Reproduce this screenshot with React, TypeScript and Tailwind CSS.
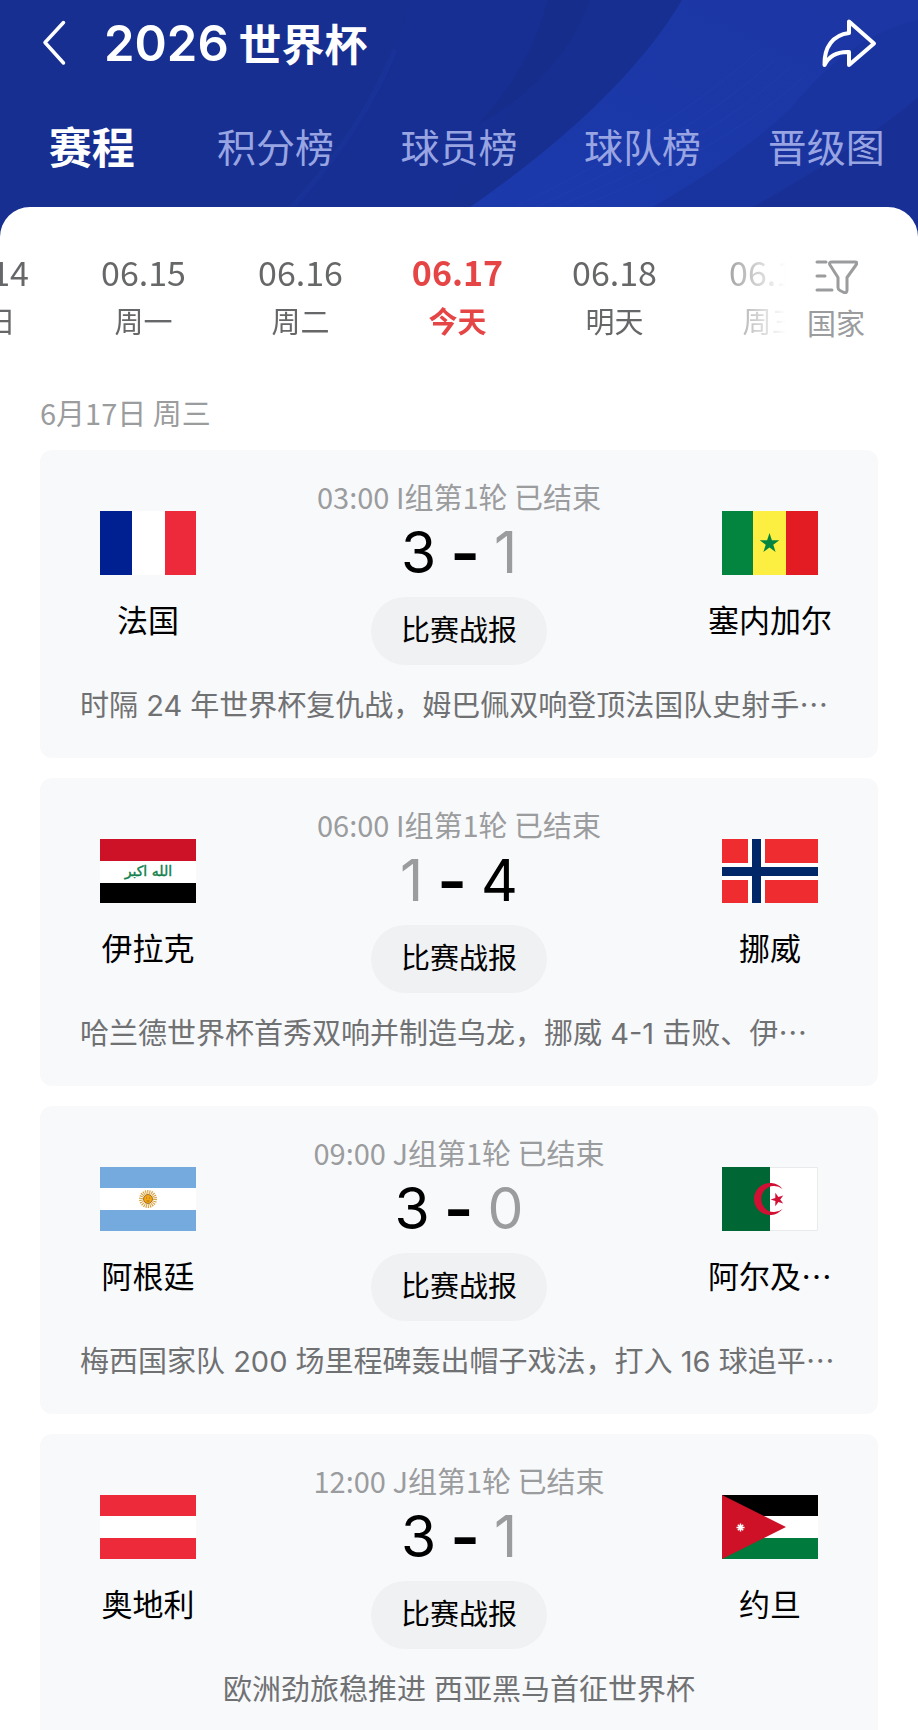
import { useState } from "react";
import type { ReactNode } from "react";
import clsx from "clsx";

/* ---------------------------------------------
   TYPES
--------------------------------------------- */

type Team = {
  name: string;
  flag: ReactNode;
};

type Match = {
  id: number;
  time: string;
  round: string;
  status: string;
  home: Team;
  away: Team;
  homeScore: number;
  awayScore: number;
  summary: string;
};

/* ---------------------------------------------
   FLAGS
--------------------------------------------- */

function Flag({ children }: { children: ReactNode }) {
  return (
    <svg viewBox="0 0 96 64" className="h-16 w-24" aria-hidden="true">
      {children}
    </svg>
  );
}

const FranceFlag = (
  <Flag>
    <rect width="96" height="64" fill="#fff" />
    <rect width="32" height="64" fill="#002091" />
    <rect x="65" width="31" height="64" fill="#ec2a3b" />
  </Flag>
);

const SenegalFlag = (
  <Flag>
    <rect width="32" height="64" fill="#04853f" />
    <rect x="31" width="33" height="64" fill="#fdef42" />
    <rect x="64" width="32" height="64" fill="#e31b22" />
    <path
      d="M47.5 22l2.4 7.2h7.4l-6 4.5 2.3 7.2-6.1-4.4-6.1 4.4 2.3-7.2-6-4.5h7.4z"
      fill="#04853f"
    />
  </Flag>
);

const IraqFlag = (
  <Flag>
    <rect width="96" height="64" fill="#fff" />
    <rect width="96" height="22" fill="#cd1126" />
    <rect y="44" width="96" height="20" />
    <g
      fill="#12804a"
      stroke="#12804a"
      strokeWidth="0.4"
      fontFamily="'DejaVu Sans', sans-serif"
      fontSize="14"
      textAnchor="middle"
    >
      <text x="36" y="37">
        اكبر
      </text>
      <text x="62" y="37">
        الله
      </text>
    </g>
  </Flag>
);

const NorwayFlag = (
  <Flag>
    <rect width="96" height="64" fill="#ef2d31" />
    <path d="M26 0h17v64h-17zM0 24h96v17h-96z" fill="#fff" />
    <path d="M30 0h9v64h-9zM0 28h96v9h-96z" fill="#002868" />
  </Flag>
);

const ArgentinaFlag = (
  <Flag>
    <rect width="96" height="64" fill="#74aade" />
    <rect y="21" width="96" height="22" fill="#fff" />
    <circle
      cx="48"
      cy="32"
      r="7"
      fill="none"
      stroke="#d9a441"
      strokeWidth="4"
      strokeDasharray="1.1 0.9"
    />
    <circle cx="48" cy="32" r="4.5" fill="#f2a516" stroke="#8a5a14" strokeWidth="0.8" />
    <path d="M46 31h1M49 31h1M46.5 34h3" stroke="#8a5a14" strokeWidth="0.7" />
  </Flag>
);

const AlgeriaFlag = (
  <Flag>
    <rect width="96" height="64" fill="#fff" />
    <rect width="48" height="64" fill="#006633" />
    <path d="M60.500 22a16 16 0 1 0 0 20a13 13 0 1 1 0-20z" fill="#d21034" />
    <path d="M48.500 32.500L61.200 28.400L53.300 39.200V25.800L61.200 36.600z" fill="#d21034" />
    <path d="M48 .5h47.500v63h-47.500" fill="none" stroke="#e8eaec" />
  </Flag>
);

const AustriaFlag = (
  <Flag>
    <rect width="96" height="64" fill="#ed2a39" />
    <rect y="21" width="96" height="22" fill="#fff" />
  </Flag>
);

const JordanFlag = (
  <Flag>
    <rect width="96" height="64" fill="#fff" />
    <rect width="96" height="21" />
    <rect y="43" width="96" height="21" fill="#007a3d" />
    <path d="M0 0l64 32-64 32z" fill="#ce1126" />
    <path
      d="M18.500 28.500v8M14.500 32.500h8M15.800 29.800l5.400 5.400M21.200 29.800l-5.400 5.400"
      stroke="#fff"
      strokeWidth="1.500"
    />
  </Flag>
);

/* ---------------------------------------------
   DATA
--------------------------------------------- */

const TABS = ["赛程", "积分榜", "球员榜", "球队榜", "晋级图"];

const DAYS = [
  { date: "06.14", label: "周日" },
  { date: "06.15", label: "周一" },
  { date: "06.16", label: "周二" },
  { date: "06.17", label: "今天" },
  { date: "06.18", label: "明天" },
  { date: "06.19", label: "周三" },
];

const MATCHES: Match[] = [
  {
    id: 1,
    time: "03:00",
    round: "I组第1轮",
    status: "已结束",
    home: { name: "法国", flag: FranceFlag },
    away: { name: "塞内加尔", flag: SenegalFlag },
    homeScore: 3,
    awayScore: 1,
    summary: "时隔 24 年世界杯复仇战，姆巴佩双响登顶法国队史射手⋯",
  },
  {
    id: 2,
    time: "06:00",
    round: "I组第1轮",
    status: "已结束",
    home: { name: "伊拉克", flag: IraqFlag },
    away: { name: "挪威", flag: NorwayFlag },
    homeScore: 1,
    awayScore: 4,
    summary: "哈兰德世界杯首秀双响并制造乌龙，挪威 4-1 击败、伊⋯",
  },
  {
    id: 3,
    time: "09:00",
    round: "J组第1轮",
    status: "已结束",
    home: { name: "阿根廷", flag: ArgentinaFlag },
    away: { name: "阿尔及⋯", flag: AlgeriaFlag },
    homeScore: 3,
    awayScore: 0,
    summary: "梅西国家队 200 场里程碑轰出帽子戏法，打入 16 球追平⋯",
  },
  {
    id: 4,
    time: "12:00",
    round: "J组第1轮",
    status: "已结束",
    home: { name: "奥地利", flag: AustriaFlag },
    away: { name: "约旦", flag: JordanFlag },
    homeScore: 3,
    awayScore: 1,
    summary: "欧洲劲旅稳推进 西亚黑马首征世界杯",
  },
];

/* ---------------------------------------------
   HEADER
--------------------------------------------- */

function HeaderArt() {
  return (
    <svg
      viewBox="0 0 918 240"
      preserveAspectRatio="none"
      className="absolute inset-0 h-full w-full"
      aria-hidden="true"
    >
      <defs>
        <linearGradient id="band" x1="0" y1="1" x2="1" y2="0">
          <stop offset="0" stopColor="#1b3aad" />
          <stop offset="1" stopColor="#1c36a3" />
        </linearGradient>
      </defs>
      <rect width="918" height="240" fill="#172f90" />
      <path d="M410 0Q380 120 285 215H440Q520 120 548 0z" fill="#18329a" opacity="0.35" />
      <path d="M548 0Q530 70 478 125Q560 80 590 0z" fill="#162b86" opacity="0.5" />
      <path d="M682 0Q620 105 460 215L425 240H918V0z" fill="url(#band)" />
      <path d="M918 20Q850 35 790 110Q730 165 640 215L600 240H918z" fill="#1a349f" />
      <path d="M918 98Q850 155 740 215L700 240H918z" fill="#183095" />
      <g fill="none" stroke="#2a49bd" strokeOpacity="0.25">
        <path d="M760 50Q660 140 500 215" />
        <path d="M775 60Q680 145 520 215" />
        <path d="M790 68Q700 150 540 215" />
        <path d="M805 76Q720 155 560 215" />
        <path d="M395 50Q360 135 290 210" strokeWidth="5" strokeOpacity="0.14" />
      </g>
    </svg>
  );
}

function Header({ active, onChange }: { active: string; onChange: (tab: string) => void }) {
  return (
    <header className="relative pb-8 text-white">
      <HeaderArt />
      <div className="relative flex h-[86px] items-center justify-between px-10">
        <div className="flex items-center gap-9">
          <button type="button" aria-label="返回">
            <svg viewBox="0 0 28 46" className="h-[46px] w-7" fill="none" aria-hidden="true">
              <path
                d="M23.500 2.500L5 22.500l18.500 20.500"
                stroke="#fff"
                strokeWidth="3.500"
                strokeLinecap="round"
                strokeLinejoin="round"
              />
            </svg>
          </button>
          <h1 className="text-[43px] leading-[48px] font-bold">
            <span className="font-['Inter'] text-[49px] font-semibold">2026</span> 世界杯
          </h1>
        </div>
        <button type="button" aria-label="分享">
          <svg viewBox="0 0 58 54" className="h-[54px] w-[58px]" fill="none" aria-hidden="true">
            <path
              d="M29 5.500v11.500C13 19 4 31 4.500 49c5-10 13-13.500 24.500-13v13L54 27.500z"
              stroke="#fff"
              strokeWidth="4"
              strokeLinejoin="round"
            />
          </svg>
        </button>
      </div>
      <nav className="relative grid h-[121px] grid-cols-5 items-center pb-1">
        {TABS.map((tab) => (
          <button
            key={tab}
            type="button"
            onClick={() => onChange(tab)}
            className={clsx(
              "leading-[56px] whitespace-nowrap",
              tab === active ? "text-[43px] font-bold text-white" : "text-[39px] text-[#98a5e2]"
            )}
          >
            {tab}
          </button>
        ))}
      </nav>
    </header>
  );
}

/* ---------------------------------------------
   DATE STRIP
--------------------------------------------- */

function DateStrip({ active, onChange }: { active: string; onChange: (date: string) => void }) {
  return (
    <div className="flex items-start justify-between">
      <div className="min-w-0 flex-1 overflow-hidden [mask-image:linear-gradient(to_left,transparent,black_96px)]">
        <div className="-ml-[92px] flex">
          {DAYS.map((day) => (
            <button
              key={day.date}
              type="button"
              onClick={() => onChange(day.date)}
              className={clsx(
                "flex w-[157px] shrink-0 flex-col items-center gap-2",
                day.date === active ? "font-bold text-[#e64545]" : "text-[#666769]"
              )}
            >
              <span className="text-[34px] leading-10">{day.date}</span>
              <span className="text-[29px] leading-10">{day.label}</span>
            </button>
          ))}
        </div>
      </div>
      <button
        type="button"
        className="flex w-[132px] shrink-0 flex-col items-center gap-2 pt-0.5 pr-8 text-[#9b9c9e]"
      >
        <svg
          viewBox="0 0 44 40"
          className="h-10 w-11"
          fill="none"
          stroke="currentColor"
          strokeWidth="3"
          strokeLinecap="round"
          strokeLinejoin="round"
          aria-hidden="true"
        >
          <path d="M3 8h9M3 22h8M3 36h15" />
          <path d="M18 8h23q3 0 1 3L33 23.500V36q0 3.500-3 2.500l-4-2q-2-1-2-3V23.500L16 11q-1.500-3 2-3z" />
        </svg>
        <span className="text-[29px] leading-10">国家</span>
      </button>
    </div>
  );
}

/* ---------------------------------------------
   MATCH CARD
--------------------------------------------- */

function TeamColumn({ team }: { team: Team }) {
  return (
    <div className="flex w-[136px] shrink-0 flex-col items-center pt-[35px]">
      {team.flag}
      <span className="mt-6 text-[31px] leading-10 whitespace-nowrap text-black">{team.name}</span>
    </div>
  );
}

function MatchCard({ match }: { match: Match }) {
  const { home, away, homeScore, awayScore } = match;

  return (
    <article className="rounded-xl bg-[#f8f9fb] px-10 pt-[26px] pb-8">
      <div className="flex justify-between">
        <TeamColumn team={home} />

        <div className="flex flex-col items-center">
          <p className="text-[29px] leading-10 whitespace-nowrap text-[#9b9c9e]">
            {match.time} {match.round} {match.status}
          </p>
          <p className="flex items-center justify-center gap-3.5 font-['Inter'] text-[57px] leading-[73px] text-black">
            <span className={clsx(homeScore < awayScore && "text-[#9b9c9e]")}>{homeScore}</span>
            <span className="text-[64px] font-semibold">-</span>
            <span className={clsx(awayScore < homeScore && "text-[#9b9c9e]")}>{awayScore}</span>
          </p>
          <button
            type="button"
            className="mt-2 h-17 rounded-full bg-[#f0f1f3] px-[30px] pb-1 text-[29px] text-black"
          >
            比赛战报
          </button>
        </div>

        <TeamColumn team={away} />
      </div>

      <p
        className={clsx(
          "mt-[21px] overflow-hidden font-['Inter','Noto_Sans_CJK_SC',sans-serif] text-[29px] leading-10 whitespace-nowrap text-[#707173]",
          !match.summary.endsWith("⋯") && "text-center"
        )}
      >
        {match.summary}
      </p>
    </article>
  );
}

/* ---------------------------------------------
   PAGE
--------------------------------------------- */

export default function App() {
  const [tab, setTab] = useState("赛程");
  const [day, setDay] = useState("06.17");

  return (
    <div className="min-h-screen bg-white font-['Noto_Sans_CJK_SC',sans-serif]">
      <Header active={tab} onChange={setTab} />

      <main className="relative -mt-8 rounded-t-[30px] bg-white pt-[45px]">
        <DateStrip active={day} onChange={setDay} />

        <section className="mt-[50px] px-10">
          <h2 className="text-[29px] leading-10 text-[#9b9c9e]">6月17日 周三</h2>
          <div className="mt-[18px] flex flex-col gap-5">
            {MATCHES.map((match) => (
              <MatchCard key={match.id} match={match} />
            ))}
          </div>
        </section>
      </main>
    </div>
  );
}
